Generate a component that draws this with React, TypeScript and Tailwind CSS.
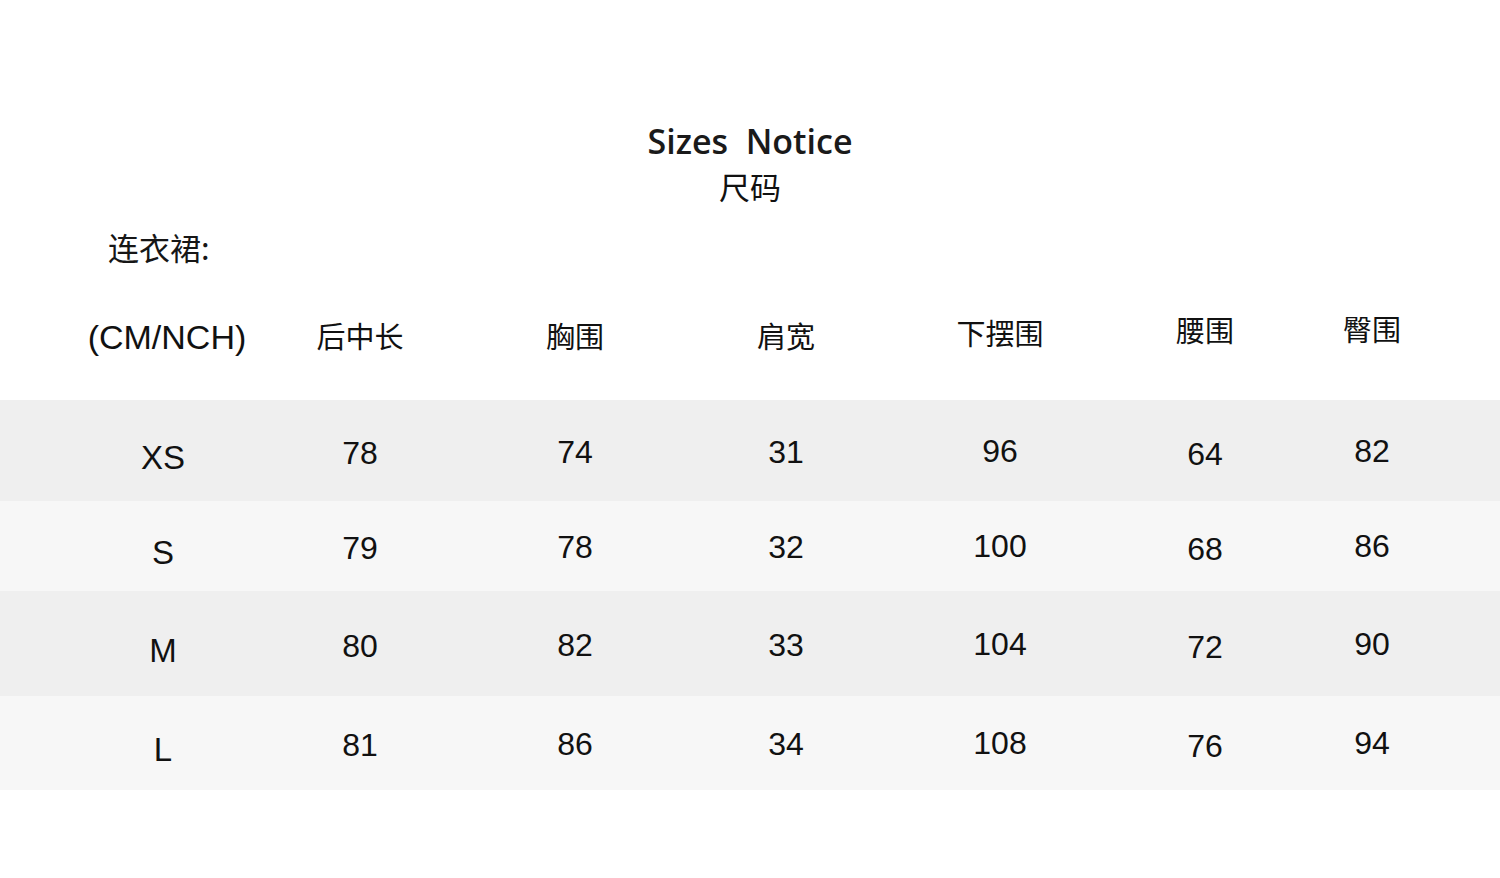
import React from 'react';

type Row = { size: string; values: number[]; height: string; bg: string };

const rows: Row[] = [
  { size: 'XS', values: [78, 74, 31, 96, 64, 82], height: 'h-[101px]', bg: 'bg-[#efefef]' },
  { size: 'S', values: [79, 78, 32, 100, 68, 86], height: 'h-[90px]', bg: 'bg-[#f7f7f7]' },
  { size: 'M', values: [80, 82, 33, 104, 72, 90], height: 'h-[105px]', bg: 'bg-[#efefef]' },
  { size: 'L', values: [81, 86, 34, 108, 76, 94], height: 'h-[94px]', bg: 'bg-[#f7f7f7]' },
];

const headers = ['后中长', '胸围', '肩宽', '下摆围', '腰围', '臀围'];

// small per-column nudges so the glyphs sit where the source image has them
const headerShift = ['pt-[4px]', 'pt-[4px]', 'pt-[4px]', 'pb-[2px]', 'pb-[8px]', 'pb-[10px]'];
const cellShift = ['pt-[4px]', 'pt-[2px]', 'pt-[2px]', 'pt-[0px]', 'pt-[6px]', 'pt-[0px]'];

const grid =
  'grid grid-cols-[261px_198px_232px_190px_238px_172px_162px] items-center';

const cjk = "font-['Noto_Sans_CJK_SC','Noto_Sans',sans-serif]";
const latin = "font-['Liberation_Sans',Arial,sans-serif]";

export default function App() {
  return (
    <div className="w-[1500px] h-[878px] bg-white text-[#111] overflow-hidden">
      <div className="pt-[120px] flex flex-col items-center">
        <div className="font-['Open_Sans',sans-serif] font-semibold text-[34px] leading-[42px] text-[#1a1a1a]">
          Sizes&nbsp; Notice
        </div>
        <div className={`${cjk} text-[31px] leading-[40px] mt-[4px]`}>尺码</div>
      </div>

      <div className={`${cjk} text-[31px] leading-[40px] pl-[108px] mt-[21px] text-[#161616]`}>
        连衣裙:
      </div>

      <div className={`${grid} h-[133px]`}>
        <div className={`${latin} text-[34px] pl-[73px] text-center pt-[8px]`}>(CM/NCH)</div>
        {headers.map((h, i) => (
          <div key={h} className={`${cjk} text-[29px] text-center ${headerShift[i]}`}>
            {h}
          </div>
        ))}
      </div>

      <div className="flex flex-col">
        {rows.map((r) => (
          <div key={r.size} className={`${grid} ${r.height} ${r.bg} w-full`}>
            <div className={`${latin} text-[33px] pl-[65px] text-center pt-[14px]`}>{r.size}</div>
            {r.values.map((v, i) => (
              <div key={i} className={`${latin} text-[32px] text-center ${cellShift[i]}`}>
                {v}
              </div>
            ))}
          </div>
        ))}
      </div>
    </div>
  );
}
